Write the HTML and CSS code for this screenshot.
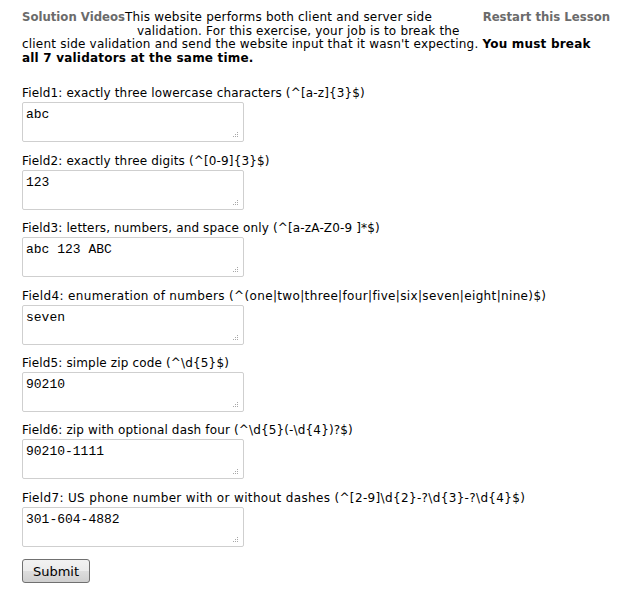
FILE: index.html
```html
<!DOCTYPE html>
<html>
<head>
<meta charset="utf-8">
<link rel="stylesheet" href="styles.css">
</head>
<body>
<div class="page">
  <div class="intro">
    <div class="intro-top">
      <a class="nav-link">Solution Videos</a>
      <p class="lead">This website performs both client and server side<br>validation. For this exercise, your job is to break the</p>
      <a class="nav-link">Restart this Lesson</a>
    </div>
    <p class="rest">client side validation and send the website input that it wasn't expecting. <b>You must break all 7 validators at the same time.</b></p>
  </div>
  <form class="fields">
    <div class="field">
      <label>Field1: exactly three lowercase characters (^[a-z]{3}$)</label>
      <div class="box"><textarea>abc</textarea><span class="grip"><svg width="6" height="6" viewBox="0 0 6 6"><rect x="4" y="0" width="1" height="1"/><rect x="2" y="2" width="1" height="1"/><rect x="4" y="2" width="1" height="1"/><rect x="0" y="4" width="1" height="1"/><rect x="2" y="4" width="1" height="1"/><rect x="4" y="4" width="1" height="1"/></svg></span></div>
    </div>
    <div class="field">
      <label>Field2: exactly three digits (^[0-9]{3}$)</label>
      <div class="box"><textarea>123</textarea><span class="grip"><svg width="6" height="6" viewBox="0 0 6 6"><rect x="4" y="0" width="1" height="1"/><rect x="2" y="2" width="1" height="1"/><rect x="4" y="2" width="1" height="1"/><rect x="0" y="4" width="1" height="1"/><rect x="2" y="4" width="1" height="1"/><rect x="4" y="4" width="1" height="1"/></svg></span></div>
    </div>
    <div class="field">
      <label>Field3: letters, numbers, and space only (^[a-zA-Z0-9 ]*$)</label>
      <div class="box"><textarea>abc 123 ABC</textarea><span class="grip"><svg width="6" height="6" viewBox="0 0 6 6"><rect x="4" y="0" width="1" height="1"/><rect x="2" y="2" width="1" height="1"/><rect x="4" y="2" width="1" height="1"/><rect x="0" y="4" width="1" height="1"/><rect x="2" y="4" width="1" height="1"/><rect x="4" y="4" width="1" height="1"/></svg></span></div>
    </div>
    <div class="field">
      <label class="wide">Field4: enumeration of numbers (^(one|two|three|four|five|six|seven|eight|nine)$)</label>
      <div class="box"><textarea>seven</textarea><span class="grip"><svg width="6" height="6" viewBox="0 0 6 6"><rect x="4" y="0" width="1" height="1"/><rect x="2" y="2" width="1" height="1"/><rect x="4" y="2" width="1" height="1"/><rect x="0" y="4" width="1" height="1"/><rect x="2" y="4" width="1" height="1"/><rect x="4" y="4" width="1" height="1"/></svg></span></div>
    </div>
    <div class="field">
      <label>Field5: simple zip code (^\d{5}$)</label>
      <div class="box"><textarea>90210</textarea><span class="grip"><svg width="6" height="6" viewBox="0 0 6 6"><rect x="4" y="0" width="1" height="1"/><rect x="2" y="2" width="1" height="1"/><rect x="4" y="2" width="1" height="1"/><rect x="0" y="4" width="1" height="1"/><rect x="2" y="4" width="1" height="1"/><rect x="4" y="4" width="1" height="1"/></svg></span></div>
    </div>
    <div class="field">
      <label>Field6: zip with optional dash four (^\d{5}(-\d{4})?$)</label>
      <div class="box"><textarea>90210-1111</textarea><span class="grip"><svg width="6" height="6" viewBox="0 0 6 6"><rect x="4" y="0" width="1" height="1"/><rect x="2" y="2" width="1" height="1"/><rect x="4" y="2" width="1" height="1"/><rect x="0" y="4" width="1" height="1"/><rect x="2" y="4" width="1" height="1"/><rect x="4" y="4" width="1" height="1"/></svg></span></div>
    </div>
    <div class="field">
      <label class="wide">Field7: US phone number with or without dashes (^[2-9]\d{2}-?\d{3}-?\d{4}$)</label>
      <div class="box"><textarea>301-604-4882</textarea><span class="grip"><svg width="6" height="6" viewBox="0 0 6 6"><rect x="4" y="0" width="1" height="1"/><rect x="2" y="2" width="1" height="1"/><rect x="4" y="2" width="1" height="1"/><rect x="0" y="4" width="1" height="1"/><rect x="2" y="4" width="1" height="1"/><rect x="4" y="4" width="1" height="1"/></svg></span></div>
    </div>
    <button type="button" class="submit">Submit</button>
  </form>
</div>
</body>
</html>
```
FILE: styles.css
```css
html, body {
  margin: 0;
  padding: 0;
  background: #fff;
}
body {
  font-family: "DejaVu Sans", Verdana, sans-serif;
  color: #000;
}
.page {
  padding: 11px 9px 0 22px;
}
.intro {
  font-size: 12px;
  line-height: 13.6px;
  letter-spacing: 0.2px;
}
.intro-top {
  display: flex;
  align-items: flex-start;
}
.nav-link {
  color: #6b6b6b;
  font-weight: bold;
  font-size: 11.7px;
  letter-spacing: 0;
  text-decoration: none;
  white-space: nowrap;
  line-height: 13.6px;
}
.lead {
  flex: 1;
  margin: 0;
  padding-left: 12px;
  text-indent: -12px;
}
.rest {
  margin: 0;
  max-width: 584px;
}
.fields {
  margin-top: 22px;
  font-size: 12px;
}
.field {
  display: flex;
  flex-direction: column;
  align-items: flex-start;
  margin-bottom: 12.4px;
}
.field label {
  line-height: 13px;
  margin-bottom: 2px;
  white-space: nowrap;
  letter-spacing: 0.15px;
}
.field label.wide {
  letter-spacing: 0.35px;
}
.box {
  position: relative;
  width: 222px;
  height: 40px;
}
.box textarea {
  display: block;
  width: 222px;
  height: 40px;
  box-sizing: border-box;
  border: 1px solid #cfcfcf;
  border-radius: 2px;
  padding: 4px 3px 2px;
  font-family: "Liberation Mono", "Courier New", monospace;
  font-size: 13px;
  line-height: 15px;
  color: #000;
  margin: 0;
  resize: none;
  outline: none;
}
.grip {
  position: absolute;
  right: 5px;
  bottom: 4px;
  width: 6px;
  height: 6px;
  line-height: 0;
}
.grip svg {
  fill: #a8a8a8;
}
.submit {
  display: block;
  margin-top: 8px;
  width: 68px;
  height: 24px;
  border: 1px solid #707070;
  border-radius: 3px;
  background: linear-gradient(#f2f2f2, #ebebeb 50%, #dddddd 51%, #cfcfcf);
  font-family: "DejaVu Sans", Tahoma, sans-serif;
  font-size: 13px;
  color: #000;
  padding: 0;
}
```
